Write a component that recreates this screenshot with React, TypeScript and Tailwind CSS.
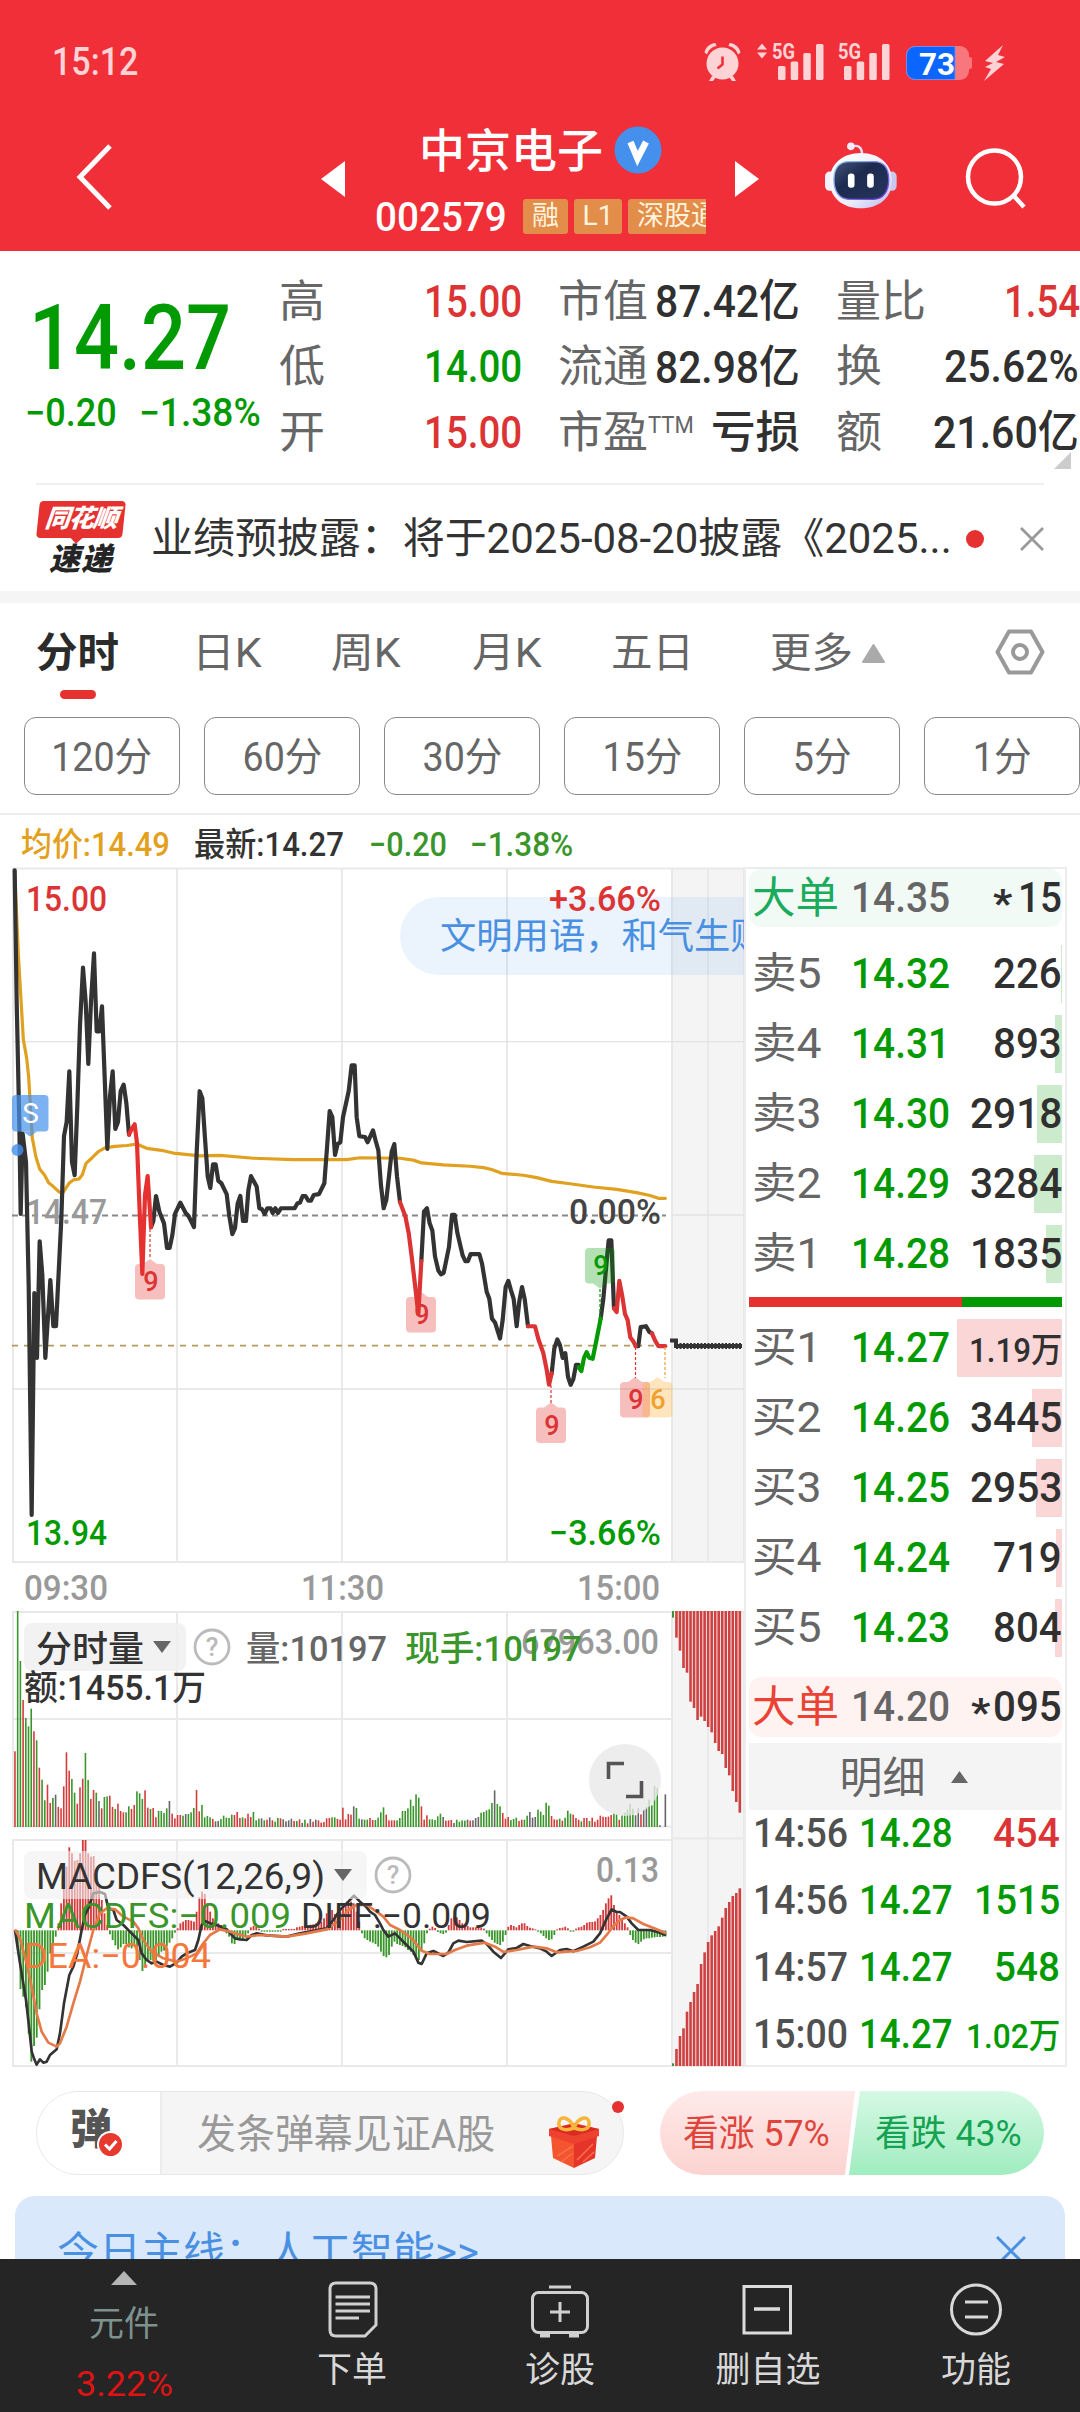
import { useLayoutEffect, useRef } from "react";
import type { ReactNode } from "react";

/** Text squeezed or stretched sideways so that it fills its box exactly. */
function Fit({ className, children }: { className: string; children: ReactNode }) {
  const box = useRef<HTMLDivElement>(null);
  const text = useRef<HTMLSpanElement>(null);
  useLayoutEffect(() => {
    if (box.current && text.current) {
      text.current.style.transform = `scaleX(${box.current.clientWidth / text.current.offsetWidth})`;
    }
  });
  return (
    <div ref={box} className={`shrink-0 whitespace-nowrap leading-none ${className}`}>
      <span ref={text} className="inline-block origin-left">
        {children}
      </span>
    </div>
  );
}

/** Chart label: x and width in chart units, y is the vertical centre. */
function Label(p: { x: number; y: number; w: number; size: number; fill: string; bold?: boolean; children: string }) {
  return (
    <text
      x={p.x}
      y={p.y + p.size * 0.356}
      fontSize={p.size}
      fill={p.fill}
      fontWeight={p.bold ? 500 : 400}
      textLength={p.w}
      lengthAdjust="spacingAndGlyphs"
    >
      {p.children}
    </text>
  );
}

function StatusIcons() {
  return (
    <svg className="h-[46px] w-[312px]" viewBox="700 38 312 46" fill="#fdd3d5">
      <circle cx="722.5" cy="63.500" r="16" />
      <path d="M704.500 52.500c1-5 5-9 11-9.500l1 3c-5 1-8 4-9.500 8.500zM740.500 52.500c-1-5-5-9-11-9.500l-1 3c5 1 8 4 9.500 8.500zM712 76l-3 5h4l3-4zM733 76l3 5h-4l-3-4z" />
      <path d="M722.500 56.500v8l-5 4" fill="none" stroke="#f12f38" strokeWidth="2.600" />
      <path d="M762 43.500l5 6h-10zM762 58.500l5-6h-10z" />
      <g fontSize="22" fontWeight="700">
        <text x="772" y="59" textLength="23" lengthAdjust="spacingAndGlyphs">5G</text>
        <text x="838" y="59" textLength="23" lengthAdjust="spacingAndGlyphs">5G</text>
      </g>
      {[778, 844].map((x) => (
        <g key={x}>
          <rect x={x} y="66" width="7.500" height="14" rx="1.500" />
          <rect x={x + 12.7} y="61.500" width="7.500" height="18.500" rx="1.500" />
          <rect x={x + 25.300} y="53" width="7.500" height="27" rx="1.500" />
          <rect x={x + 38} y="44" width="7.500" height="36" rx="1.500" />
        </g>
      ))}
      <rect x="906" y="46" width="63" height="34" rx="9" fill="#f8777c" />
      <rect x="968" y="57" width="4" height="12" rx="2" fill="#f8777c" />
      <path d="M915 46.500H955V79.500H915a8.500 8.500 0 0 1-8.500-8.500V55a8.500 8.500 0 0 1 8.500-8.500z" fill="#0a66ff" stroke="#7f87e0" />
      <text x="919" y="75" fontSize="32" fontWeight="700" fill="#fff" textLength="36" lengthAdjust="spacingAndGlyphs">73</text>
      <path d="M1003 45l-18 16 8 2-8 4 6 2-7 12 20-17-8-2 9-5-7-2z" />
    </svg>
  );
}

function Robot() {
  return (
    <svg className="h-[67px] w-[72px]" viewBox="405 367 217 202">
      <defs>
        <linearGradient id="head" x1="0" y1="0" x2="1" y2="1">
          <stop offset="0" stopColor="#ffffff" />
          <stop offset=".6" stopColor="#eeeefe" />
          <stop offset="1" stopColor="#b9b6ea" />
        </linearGradient>
        <linearGradient id="visor" x1="0" y1="0" x2="1" y2="1">
          <stop offset="0" stopColor="#46537a" />
          <stop offset=".4" stopColor="#1d2a50" />
          <stop offset="1" stopColor="#27365d" />
        </linearGradient>
        <linearGradient id="rim" x1="0" y1="0" x2="1" y2="1">
          <stop offset="0" stopColor="#8ad4f5" />
          <stop offset="1" stopColor="#6b2fd8" />
        </linearGradient>
      </defs>
      <path d="M488 380c16-4 28 2 29 22" fill="none" stroke="#eadcf6" strokeWidth="7" />
      <circle cx="483" cy="380" r="11.500" fill="#f5ecfb" />
      <rect x="405" y="456" width="36" height="58" rx="14" fill="#f3f1fd" />
      <rect x="585" y="456" width="36" height="58" rx="14" fill="#c9c6ef" />
      <path d="M513 400c56 0 94 34 94 84 0 52-40 83-94 83s-94-31-94-83c0-50 38-84 94-84z" fill="url(#head)" />
      <path d="M478 426h74c30 0 45 20 45 54s-15 60-47 60h-71c-32 0-47-26-47-60s16-54 46-54z" fill="url(#visor)" stroke="url(#rim)" strokeWidth="4" />
      <rect x="474" y="462" width="20" height="43" rx="9" fill="#fff" />
      <rect x="532" y="462" width="20" height="43" rx="9" fill="#fff" />
    </svg>
  );
}

function Header() {
  return (
    <header className="flex h-[251px] flex-col bg-[#f12f38] text-white">
      <div className="mt-[38px] flex h-[46px] items-center justify-between pr-[68px] pl-[52px]">
        <Fit className="mt-[2px] w-[86px] text-[38px] font-medium text-[#fdd3d5]">15:12</Fit>
        <StatusIcons />
      </div>
      <div className="mt-[36px] flex h-[120px] items-start">
        <svg className="mt-[23px] ml-[74px] h-[68px] w-[42px]" viewBox="0 0 42 68" fill="none" stroke="#fff" strokeWidth="5">
          <path d="M36 3L6 34L36 65" />
        </svg>
        <svg className="mt-[41px] ml-[205px] h-[36px] w-[24px]" viewBox="0 0 24 36" fill="#fff">
          <path d="M24 0V36L0 18z" />
        </svg>
        <div className="ml-[29px] w-[332px]">
          <div className="mt-[5px] flex h-[50px] items-center">
            <Fit className="mt-[2px] ml-[45px] w-[184px] text-[46px] font-medium">中京电子</Fit>
            <svg className="ml-[11px] size-[48px]" viewBox="0 0 48 48">
              <circle cx="24" cy="24" r="23.500" fill="#4690ed" />
              <path d="M16.500 16L23.500 32.500L32 16" fill="none" stroke="#fff" strokeWidth="6.500" />
            </svg>
          </div>
          <div className="mt-[22px] flex h-[38px] items-center gap-[6px] overflow-hidden text-[#fff3dc]">
            <Fit className="mt-[3px] mr-[10px] ml-[1px] w-[132px] text-[41px] font-medium text-white">002579</Fit>
            <span className="flex h-[35px] w-[45px] shrink-0 items-center justify-center rounded-[3px] bg-[#e38d4b] text-[27px] leading-none">融</span>
            <span className="flex h-[35px] w-[48px] shrink-0 items-center justify-center rounded-[3px] bg-[#e38d4b] text-[28px] leading-none">L1</span>
            <span className="flex h-[35px] w-[100px] shrink-0 items-center rounded-[3px] bg-[#e38d4b] pl-[9px] text-[27px] leading-none">深股通</span>
          </div>
        </div>
        <svg className="mt-[41px] ml-[29px] h-[36px] w-[24px]" viewBox="0 0 24 36" fill="#fff">
          <path d="M0 0V36L24 18z" />
        </svg>
        <div className="mt-[22px] ml-[66px]">
          <Robot />
        </div>
        <svg className="mt-[27px] ml-[67px] h-[64px] w-[64px]" viewBox="964 147 64 64" fill="none" stroke="#fff" strokeWidth="4.500">
          <circle cx="994.500" cy="177" r="26.500" />
          <path d="M1013 195l11 12" />
        </svg>
      </div>
    </header>
  );
}

function Quote() {
  const label = "text-[44px] text-[#666]";
  return (
    <section className="flex h-[232px] items-start">
      <div className="w-[278px] shrink-0">
        <div className="mt-[43px] flex h-[88px] items-center">
          <Fit className="ml-[29px] w-[202px] text-[91px] font-medium text-[#029a02]">14.27</Fit>
        </div>
        <div className="mt-[12px] flex h-[38px] items-center text-[#029a02]">
          <Fit className="ml-[25px] w-[92px] text-[38px] font-medium">−0.20</Fit>
          <Fit className="ml-[22px] w-[122px] text-[38px] font-medium">−1.38%</Fit>
        </div>
      </div>
      <div className="mt-[18px] ml-px grow text-[#303030]">
        <div className="flex h-[65px] items-center">
          <Fit className={`w-[46px] ${label}`}>高</Fit>
          <Fit className="ml-[99px] w-[98px] text-[44px] font-medium text-[#dc3434]">15.00</Fit>
          <Fit className={`ml-[36px] w-[90px] ${label}`}>市值</Fit>
          <Fit className="ml-[7px] w-[145px] text-[45px] font-medium">87.42亿</Fit>
          <Fit className={`ml-[36px] w-[90px] ${label}`}>量比</Fit>
          <Fit className="ml-[78px] w-[76px] text-[44px] font-medium text-[#dc3434]">1.54</Fit>
        </div>
        <div className="flex h-[66px] items-center">
          <Fit className={`w-[46px] ${label}`}>低</Fit>
          <Fit className="ml-[99px] w-[98px] text-[44px] font-medium text-[#029a02]">14.00</Fit>
          <Fit className={`ml-[36px] w-[90px] ${label}`}>流通</Fit>
          <Fit className="ml-[7px] w-[145px] text-[45px] font-medium">82.98亿</Fit>
          <Fit className={`ml-[36px] w-[46px] ${label}`}>换</Fit>
          <Fit className="ml-[62px] w-[135px] text-[44px] font-medium">25.62%</Fit>
        </div>
        <div className="flex h-[65px] items-center">
          <Fit className={`w-[46px] ${label}`}>开</Fit>
          <Fit className="ml-[99px] w-[98px] text-[44px] font-medium text-[#dc3434]">15.00</Fit>
          <Fit className={`ml-[36px] w-[90px] ${label}`}>市盈</Fit>
          <Fit className="mb-[16px] w-[46px] text-[24px] text-[#666]">TTM</Fit>
          <Fit className="ml-[17px] w-[89px] text-[44px] font-medium">亏损</Fit>
          <Fit className={`ml-[36px] w-[46px] ${label}`}>额</Fit>
          <Fit className="ml-[51px] w-[146px] text-[45px] font-medium">21.60亿</Fit>
        </div>
        <svg className="-mt-[13px] ml-[775px] h-[17px] w-[17px]" viewBox="0 0 17 17" fill="#ccc">
          <path d="M17 0V17H0z" />
        </svg>
      </div>
    </section>
  );
}

function News() {
  return (
    <section className="mx-[36px] flex h-[108px] items-start border-t-2 border-[#f0f0f0]">
      <div className="mt-[16px] w-[90px] text-center leading-none font-black italic">
        <div className="relative mx-[2px] h-[37px] -skew-x-6 rounded-[4px] bg-[#e63131] pt-[5px] text-[25px] tracking-[-1px] text-white">
          同花顺
          <i className="absolute bottom-[-4px] left-[36px] size-[9px] rotate-45 bg-[#e63131]" />
        </div>
        <div className="mt-[6px] text-[31px] tracking-[1px] text-[#252525]">速递</div>
      </div>
      <div className="mt-[28px] flex h-[52px] items-center">
        <Fit className="ml-[25px] w-[801px] text-[42px] text-[#333]">业绩预披露：将于2025-08-20披露《2025...</Fit>
        <span className="ml-[14px] size-[18px] rounded-full bg-[#e63131]" />
        <svg className="ml-[36px] size-[24px]" viewBox="0 0 24 24" stroke="#999" strokeWidth="2.800">
          <path d="M1 1L23 23M23 1L1 23" />
        </svg>
      </div>
    </section>
  );
}

function Tabs() {
  return (
    <section className="border-t-[12px] border-[#f5f5f5] text-[41px] text-[#666]">
      <div className="flex h-[98px] items-center pt-[2px]">
        <Fit className="ml-[36px] w-[83px] font-bold text-[#2b2b2b]">分时</Fit>
        <Fit className="ml-[73px] w-[70px]">日K</Fit>
        <Fit className="ml-[69px] w-[70px]">周K</Fit>
        <Fit className="ml-[71px] w-[70px]">月K</Fit>
        <Fit className="ml-[69px] w-[83px]">五日</Fit>
        <Fit className="ml-[76px] w-[83px]">更多</Fit>
        <svg className="ml-[9px] h-[19px] w-[23px]" viewBox="0 0 23 19" fill="#aaa" stroke="#aaa" strokeWidth="2" strokeLinejoin="round">
          <path d="M11.500 1L22 18H1z" />
        </svg>
        <svg className="mb-[2px] ml-[110px] h-[48px] w-[50px]" viewBox="0 0 50 48" fill="none" stroke="#999" strokeWidth="4">
          <path d="M14 3.500H36L47.500 24L36 44.500H14L2.500 24z" strokeLinejoin="round" />
          <circle cx="25" cy="24" r="7" />
        </svg>
      </div>
      <div className="-mt-[11px] ml-[60px] h-[9px] w-[36px] rounded-full bg-[#e63131]" />
      <div className="mt-[18px] flex gap-[24px] pl-[24px] text-[40px]">
        {["120分", "60分", "30分", "15分", "5分", "1分"].map((t) => (
          <div key={t} className="flex h-[78px] w-[156px] shrink-0 items-center justify-center rounded-[12px] border border-[#888]">
            <span className="mt-[3px] scale-x-[.94] leading-none">{t}</span>
          </div>
        ))}
      </div>
      <div className="mt-[18px] flex h-[53px] items-center border-t-2 border-[#ececec] pt-[8px] text-[33px] font-medium">
        <Fit className="ml-[21px] w-[149px] text-[#e3a01c]">均价:14.49</Fit>
        <Fit className="ml-[24px] w-[150px] text-[#333]">最新:14.27</Fit>
        <Fit className="ml-[25px] w-[78px] text-[#3a962a]">−0.20</Fit>
        <Fit className="ml-[23px] w-[103px] text-[#3a962a]">−1.38%</Fit>
      </div>
    </section>
  );
}

const priceRuns: [string, string][] = [
  ["#333", "44,22 50,300 58,560 62,750 68,580 78,640 86,900 95,1388 103,918 111,1055 119,808 127,880 136,1055 151,890 160,988 168,988 184,760 192,585 200,555 208,448 216,640 224,668 232,520 240,350 249,228 257,300 265,432 273,300 282,198 290,363 298,363 306,310 314,460 322,612 330,500 338,448 346,570 354,555 362,490 371,476 379,515 387,582"],
  ["#333", "453,778 460,765 468,712 478,745 492,770 501,822 509,822 517,795 525,750 541,726 557,748 566,755 582,778 590,620 599,490 607,505 615,590 623,670 631,695 639,645 647,645 655,680 664,685 680,708 688,755 697,793 705,780 713,728 721,712 729,765 738,765 745,700 753,670 770,692 778,738 786,740 794,750 802,738 812,738 818,748 826,738 834,748 843,738 884,738 892,728 900,726 908,712 916,712 925,722 933,722 941,710 957,708 973,685 981,610 989,532 997,545 1005,625 1013,602 1021,598 1029,545 1046,490 1055,435 1064,435 1070,545 1078,585 1095,587 1103,598 1119,573 1127,595 1135,615 1143,690 1151,738 1159,720 1167,670 1175,618 1183,602 1191,670 1200,725"],
  ["#333", "1264,850 1272,745 1281,738 1289,770 1297,785 1305,840 1315,870 1323,878 1331,875 1347,820 1356,752 1364,752 1372,790 1388,838 1396,850 1404,850 1412,835 1438,835 1446,855 1460,915 1468,930 1476,972 1485,980 1500,1014 1508,975 1517,905 1525,892 1533,912 1541,930 1550,988 1558,935 1566,905 1574,930 1584,988"],
  ["#333", "1655,1088 1663,1035 1672,1016 1680,1028 1688,1055 1696,1045 1704,1095 1712,1112 1720,1100 1728,1070 1736,1070"],
  ["#333", "1802,972 1810,930 1822,835 1826,806 1834,806 1842,950"],
  ["#333", "1907,1030 1915,1030 1922,990 1938,988 1948,1000 1956,1003"],
  ["#e63131", "387,582 395,570 404,560 411,600 419,745 427,877 435,710 443,670 453,778"],
  ["#dc3434", "1200,725 1216,755 1226,790 1235,840 1245,900 1255,962 1264,850"],
  ["#dc3434", "1584,988 1605,988 1615,1015 1630,1045 1640,1080 1647,1112 1655,1088"],
  ["#029a02", "1736,1075 1744,1083 1752,1055 1760,1043 1768,1055 1778,1057 1790,1015 1802,972"],
  ["#dc3434", "1842,950 1850,958 1858,892 1867,925 1875,962 1883,975 1891,1012 1900,1020 1907,1030"],
  ["#dc3434", "1956,1003 1965,1018 1975,1030 1996,1030"],
];
const average =
  "44,22 55,200 65,320 70,380 80,420 86,460 97,590 108,630 119,655 134,668 146,684 160,692 178,704 190,704 207,685 220,678 237,676 247,667 258,643 275,632 295,618 315,610 345,607 380,605 410,602 440,611 490,616 520,621 600,627 660,626 760,632 880,635 1040,635 1080,631 1200,632 1240,636 1265,642 1330,646 1410,649 1450,652 1475,656 1505,664 1570,668 1610,673 1655,681 1710,686 1780,693 1850,698 1910,705 1950,711 1975,717 1996,717";

function Marker({ x, y, tx, color, bg, text, down }: { x: number; y: number; tx: number; color: string; bg: string; text: string; down?: boolean }) {
  return (
    <g>
      <rect x={x} y={y} width="30" height="35.500" rx="4" fill={bg} />
      <path d={down ? `M${x + 8} ${y + 35.5}l7 5 7-5z` : `M${x + 8} ${y}l7-5 7 5z`} fill={bg} />
      <text x={tx} y={y + 27} fontSize="27" fontWeight="500" textAnchor="middle" fill={color}>
        {text}
      </text>
    </g>
  );
}

function PriceChart() {
  return (
    <svg className="block h-[744px] w-[745px]" viewBox="0 866 745 744">
      <rect x="671" y="868" width="74" height="694" fill="#f4f4f4" />
      <g stroke="#e9e9e9" strokeWidth="2" fill="none">
        <path d="M12 868.500H745M12 1562H745M13 868V1562M177 868V1562M342 868V1562M507 868V1562M672 868V1562M708 868V1562M744 868V1562" />
        <path d="M12 1041.700H745M12 1389H745M672 1215H745" strokeWidth="1.300" stroke="#e2e2e2" />
      </g>
      <path d="M439 897H745V975H439a39 39 0 0 1 0-78z" fill="#4690ed" fillOpacity=".11" />
      <path d="M12 1215.500H666" stroke="#888" strokeWidth="2" strokeDasharray="6 4" />
      <path d="M12 1345.600H668" stroke="#b59a5b" strokeWidth="1.800" strokeDasharray="6 6" />
      <Label x={26} y={1212} w={81} size={35} fill="#999" bold>14.47</Label>
      <g transform="translate(0 860) scale(.33333 .47189)" fill="none" strokeLinejoin="round" strokeLinecap="round">
        <polyline points={average} stroke="#e0a020" strokeWidth="3.200" vectorEffect="non-scaling-stroke" />
        {priceRuns.map(([color, points]) => (
          <polyline key={points} points={points} stroke={color} strokeWidth="4.200" vectorEffect="non-scaling-stroke" />
        ))}
      </g>
      <path d="M672 1338.500V1340.500H676V1346H742" fill="none" stroke="#333" strokeWidth="4" />
      <path d="M676 1346H742" fill="none" stroke="#333" strokeWidth="6" strokeDasharray="2 1.500" />
      <g stroke="#dc3434" strokeWidth="1.200" strokeDasharray="3 2">
        <path d="M150 1229V1257M551 1385V1404M635.500 1347V1378" />
        <path d="M600 1289V1318" stroke="#029a02" />
        <path d="M665 1347V1378" stroke="#e8a030" />
      </g>
      <Marker x={135} y={1264} tx={151} color="#dc3434" bg="#e6313150" text="9" />
      <Marker x={406} y={1297} tx={422} color="#dc3434" bg="#e6313150" text="9" />
      <Marker x={536} y={1407.500} tx={552} color="#dc3434" bg="#e6313150" text="9" />
      <Marker x={620} y={1382} tx={636} color="#dc3434" bg="#e6313150" text="9" />
      <Marker x={642.500} y={1382} tx={658} color="#f0a02c" bg="#ffa8204c" text="6" />
      <Marker x={585} y={1248} tx={601} color="#029a02" bg="#029a024c" text="9" down />
      <rect x="12" y="1095" width="36.500" height="36.500" rx="4" fill="#4690edb4" />
      <path d="M23 1131.500l7 5 7-5z" fill="#4690edb4" />
      <circle cx="17.500" cy="1150" r="6" fill="#4690edd0" />
      <text x="30.500" y="1123" fontSize="28" textAnchor="middle" fill="#fff">S</text>
      <Label x={26} y={899} w={81} size={35} fill="#dc3434" bold>15.00</Label>
      <Label x={26} y={1533} w={81} size={35} fill="#029a02" bold>13.94</Label>
      <Label x={549} y={899} w={112} size={35} fill="#dc3434" bold>+3.66%</Label>
      <Label x={569} y={1212} w={92} size={35} fill="#444" bold>0.00%</Label>
      <Label x={549} y={1533} w={112} size={35} fill="#029a02" bold>−3.66%</Label>
      <text x="440" y="949" fontSize="36.300" fill="#4a90e2">文明用语，和气生财</text>
      <Label x={24} y={1588} w={84} size={35} fill="#999" bold>09:30</Label>
      <Label x={301} y={1588} w={83} size={35} fill="#999" bold>11:30</Label>
      <Label x={577} y={1588} w={83} size={35} fill="#999" bold>15:00</Label>
    </svg>
  );
}

const STEP = 8.13;
const tones: Record<string, string> = { r: "#d43c3c", g: "#3a962a", x: "#666" };

/** One entry per minute: bar height and tone (r rising, g falling, x flat). */
const volume =
  "227r 648g 498g 381r 327g 302g 355g 287r 260g 178r 142g 80g 127r 72r 87g 97x 60r 56r 122r 224r 169r 144g 103g 70r 119r 145r 222g 141g 84r 111r 103g 78x 56r 90g 92g 94r 60r 54g 70r 48r 44r 44g 62g 54r 66r 107g 101g 84g 110r 58r 54g 57r 29r 48g 48g 42g 56g 78x 40r 26r 36r 36r 34g 39x 39g 44g 57g 111r 47r 66g 29g 33g 29g 24r 17x 18x 24g 34g 28g 27g 37g 36r 45r 27r 29g 26r 40r 30r 45g 20g 25g 26x 20g 22r 29x 20r 16g 27g 26r 23x 17x 20x 25x 18r 18g 23r 12x 22g 11r 24x 16r 22x 20r 13r 15r 26r 27r 29g 29g 24r 22r 58r 23r 39r 37r 62x 57g 25g 23x 22g 22g 27r 21r 21g 28g 44g 59g 37r 20r 20r 20r 20g 27g 48g 48g 56g 82g 63g 98g 88g 62r 22r 35r 23g 23g 21g 32g 40g 30x 19r 20r 21r 12x 22g 16g 20g 19g 22x 19r 20x 27x 30x 43g 45g 50g 53g 72g 110x 69g 62g 42r 25r 30r 21g 24g 28g 18r 22r 22g 34g 45x 28x 30x 52g 46g 36g 73g 64g 33r 23r 22r 25g 19r 28g 49g 40g 37r 27r 22r 17g 27r 27r 18g 28r 16r 22r 34r 31r 30r 31r 36r 41g 38g 22r 35g 43g 52g 70g 55g 35x 57x 38r 52x 60x 82g 65g 123g 117g 5x 0x 98x";

const macd = [
  0, -60, -176, -199, -229, -310, -394, -347, -322, -237, -179, -164, -124, -69, -39, -19, 21, 81, 171, 191, 249, 231, 209, 211, 231, 271, 271, 231, 221, 223, 171,
  131, 91, 51, 16, -12, -29, -45, -57, -51, -41, -41, -51, -54, -47, -54, -89, -122, -104, -89, -89, -91, -89, -79, -64, -61, -49, -37, -24, -7, 6, 21, 26, 31, 31,
  29, 26, 56, 99, 116, 109, 81, 56, 36, 31, 21, 16, 9, -9, -19, -39, -41, -29, -24, -29, -19, -9, 9, 13, 11, 5, -4, -4, -4, -4, -4, -4, -4, -4, 4, 4, 4, 4, 4, 9,
  11, 13, 13, 15, 17, 18, 20, 22, 26, 36, 51, 66, 61, 49, 51, 56, 66, 76, 81, 86, 81, 56, 26, -9, -24, -29, -34, -37, -41, -49, -64, -77, -81, -74, -49, -34, -41,
  -44, -47, -51, -59, -64, -74, -84, -89, -64, -39, -9, 5, 11, 7, -5, -9, -11, -7, 16, 36, 41, 39, 31, 21, 16, 13, 9, 9, 9, 9, 8, 5, -9, -19, -29, -37, -41, -44,
  -34, -14, 11, 16, 13, 9, 16, 21, 21, 13, 8, 6, 3, -4, -9, -17, -24, -29, -27, -14, 3, 7, 8, 11, 6, -4, -4, 5, 9, 11, 16, 23, 25, 25, 27, 36, 46, 61, 81, 96, 105,
  76, 56, 46, 36, 21, 9, -14, -29, -37, -41, -34, -27, -24, -24, -22, -21, -20, -20, -19, -18,
];

const diff =
  "45,1020 60,1120 78,1230 86,1300 95,1385 103,1408 110,1424 120,1408 130,1418 140,1415 150,1395 170,1378 180,1330 192,1240 208,1155 220,1130 232,1090 245,1020 255,975 265,955 280,910 300,906 315,912 325,955 340,960 350,990 370,1005 395,1030 415,1050 425,1090 440,1110 455,1120 470,1115 490,1125 510,1130 530,1118 545,1100 560,1090 585,1080 595,1050 605,1005 615,993 630,1000 650,1005 680,1018 705,1045 720,1048 740,1050 755,1035 770,1030 800,1036 860,1040 900,1030 980,1015 1000,990 1020,960 1045,935 1062,917 1080,935 1098,950 1110,965 1125,975 1140,1000 1150,1020 1165,1040 1185,1030 1200,1045 1220,1065 1240,1085 1255,1118 1265,1122 1280,1090 1300,1083 1330,1098 1345,1088 1360,1060 1375,1052 1400,1056 1445,1052 1460,1062 1480,1085 1503,1104 1525,1078 1550,1074 1570,1062 1590,1068 1620,1075 1640,1085 1655,1098 1680,1080 1700,1077 1720,1084 1750,1070 1780,1055 1800,1030 1818,990 1835,958 1850,966 1860,966 1880,980 1895,1000 1915,1020 1950,1020 1980,1028 1998,1036";
const dea =
  "45,1018 60,1045 80,1120 95,1190 110,1270 125,1325 145,1358 170,1370 180,1360 200,1310 220,1240 240,1175 260,1095 280,1020 300,970 320,955 345,958 370,980 400,995 415,1015 430,1050 455,1085 490,1105 530,1115 560,1105 590,1090 610,1060 630,1035 660,1018 690,1025 740,1040 780,1035 860,1040 920,1030 980,1018 1020,990 1045,960 1070,945 1100,945 1130,965 1150,980 1170,1005 1200,1020 1235,1045 1265,1082 1290,1092 1340,1092 1365,1080 1400,1067 1455,1058 1485,1070 1510,1086 1550,1080 1600,1070 1640,1075 1670,1087 1730,1083 1770,1072 1800,1058 1820,1035 1840,1008 1860,990 1880,982 1900,985 1930,1002 1970,1018 1998,1030";

const sideTop = [143, 182, 234, 248, 335, 354, 390, 380, 393, 411, 427, 459, 483, 492, 534, 556, 603, 636, 668];
const sideBottom = [1377, 1338, 1315, 1265, 1236, 1206, 1182, 1122, 1087, 1056, 1036, 1023, 1009, 983, 954, 936, 918, 909, 895];

function HelpIcon({ cx, cy }: { cx: number; cy: number }) {
  return (
    <g>
      <circle cx={cx} cy={cy} r="17" fill="none" stroke="#bbb" strokeWidth="2.800" />
      <text x={cx} y={cy + 9} fontSize="26" fontWeight="500" textAnchor="middle" fill="#bbb">?</text>
    </g>
  );
}

function Indicators() {
  return (
    <svg className="block h-[460px] w-[745px]" viewBox="0 1610 745 460">
      <rect x="672" y="1611" width="73" height="455" fill="#f4f4f4" />
      <path
        d="M12 1612H745M12 1719H671M12 1826.500H671M13 1612V1827M177 1612V1827M342 1612V1827M507 1612V1827M12 1840H671M12 1953H671M12 2066H745M13 1840V2066M177 1840V2066M342 1840V2066M507 1840V2066M672 1612V2066M708 1612V2066M744 1612V2066M672 1838.500H745"
        fill="none"
        stroke="#e9e9e9"
        strokeWidth="2"
      />
      <g transform="translate(0 1590) scale(.33333)">
        {volume.split(" ").map((bar, i) => {
          const h = parseInt(bar, 10);
          return <rect key={i} x={42.5 + i * STEP} y={711 - h} width="4.800" height={h} fill={tones[bar.slice(-1)]} />;
        })}
        {macd.map((v, i) => (
          <rect key={i} x={42.5 + i * STEP} y={v > 0 ? 1021 - v : 1021} width="5.500" height={Math.abs(v)} fill={v > 0 ? tones.r : tones.g} />
        ))}
        {sideTop.map((y, i) => (
          <g key={i} fill="#cf4040">
            <rect x={2025.500 + i * 10.56} y="63" width="7.800" height={y - 63} />
            <rect x={2025.500 + i * 10.56} y={sideBottom[i]} width="7.800" height={1428 - sideBottom[i]} />
          </g>
        ))}
        <rect x="2016" y="63" width="6" height="20" fill="#3a962a" />
        <rect x="2016" y="1420" width="6" height="8" fill="#3a962a" />
        <g fill="none" strokeLinejoin="round">
          <polyline points={diff} stroke="#333" strokeWidth="8" />
          <polyline points={dea} stroke="#e47a48" strokeWidth="8" />
        </g>
      </g>

      <rect x="24" y="1623" width="162" height="48" rx="8" fill="#f0f0f0" fillOpacity=".85" />
      <Label x={36} y={1649.500} w={108} size={36} fill="#333" bold>分时量</Label>
      <path d="M153 1641H171L162 1653z" fill="#666" />
      <HelpIcon cx={212} cy={1647} />
      <Label x={246} y={1649} w={141} size={35} fill="#666" bold>量:10197</Label>
      <Label x={521} y={1642} w={138} size={35} fill="#999" bold>67963.00</Label>
      <Label x={405} y={1649} w={177} size={35} fill="#3a962a" bold>现手:10197</Label>
      <Label x={24} y={1688} w={182} size={35} fill="#333" bold>额:1455.1万</Label>
      <circle cx="625" cy="1780" r="36" fill="#e8e8e8" fillOpacity=".8" />
      <path d="M624 1763.500H608.500V1779M626 1796.500H641.500V1781" fill="none" stroke="#555" strokeWidth="3.600" />

      <rect x="24" y="1851" width="343" height="48" rx="8" fill="#f0f0f0" fillOpacity=".6" />
      <Label x={36} y={1876.500} w={289} size={36} fill="#333">MACDFS(12,26,9)</Label>
      <path d="M334 1869H352L343 1881z" fill="#666" />
      <HelpIcon cx={393} cy={1875} />
      <Label x={596} y={1870} w={63} size={35} fill="#999" bold>0.13</Label>
      <Label x={24} y={1916} w={267} size={35} fill="#3a962a">MACDFS:−0.009</Label>
      <Label x={301} y={1916} w={190} size={35} fill="#333">DIFF:−0.009</Label>
      <Label x={24} y={1956} w={187} size={35} fill="#f5773b">DEA:−0.004</Label>
    </svg>
  );
}

/** Order book level: name, price, volume; bar is the width of the depth bar. */
function Level({ name, price, vol, bar, tone, volWidth }: { name: string; price: string; vol: string; bar: string; tone: string; volWidth: string }) {
  return (
    <div className="relative flex h-[58px] items-center">
      <i className={`absolute top-0 right-0 h-full ${bar} ${tone}`} />
      <Fit className="relative ml-[3px] w-[70px] text-[42px] text-[#666]">{name}</Fit>
      <Fit className="relative ml-[29px] w-[99px] text-[42px] font-medium text-[#029a02]">{price}</Fit>
      <Fit className={`relative ml-auto font-medium text-[#303030] ${volWidth}`}>{vol}</Fit>
    </div>
  );
}

function OrderBook() {
  const four = "w-[92px] text-[42px]";
  const three = "w-[69px] text-[42px]";
  const star = "w-[19px] pt-[12px] text-[38px] font-bold text-[#303030]";
  return (
    <aside className="-ml-px mt-px h-[1200px] w-[323px] border-2 border-[#ececec] px-[3px]">
      <div className="flex h-[58px] items-center rounded-[12px] bg-[#f2faf6]">
        <Fit className="ml-[3px] w-[87px] text-[43px] text-[#1aab5c]">大单</Fit>
        <Fit className="ml-[12px] w-[99px] text-[42px] font-medium text-[#666]">14.35</Fit>
        <Fit className={`ml-auto ${star}`}>*</Fit>
        <Fit className="ml-[6px] w-[44px] text-[42px] font-medium text-[#303030]">15</Fit>
      </div>
      <div className="mt-[18px] flex flex-col gap-[12px]">
        <Level name="卖5" price="14.32" vol="226" bar="w-px" tone="bg-[#029a0233]" volWidth={three} />
        <Level name="卖4" price="14.31" vol="893" bar="w-[7px]" tone="bg-[#029a0233]" volWidth={three} />
        <Level name="卖3" price="14.30" vol="2918" bar="w-[25px]" tone="bg-[#029a0233]" volWidth={four} />
        <Level name="卖2" price="14.29" vol="3284" bar="w-[28px]" tone="bg-[#029a0233]" volWidth={four} />
        <Level name="卖1" price="14.28" vol="1835" bar="w-[16px]" tone="bg-[#029a0233]" volWidth={four} />
      </div>
      <div className="mt-[14px] flex h-[10px]">
        <span className="w-[213px] bg-[#e63131]" />
        <span className="grow bg-[#029a02]" />
      </div>
      <div className="mt-[12px] flex flex-col gap-[12px]">
        <Level name="买1" price="14.27" vol="1.19万" bar="w-[105px]" tone="bg-[#e6313133]" volWidth="w-[93px] pt-[3px] text-[34px]" />
        <Level name="买2" price="14.26" vol="3445" bar="w-[30px]" tone="bg-[#e6313133]" volWidth={four} />
        <Level name="买3" price="14.25" vol="2953" bar="w-[26px]" tone="bg-[#e6313133]" volWidth={four} />
        <Level name="买4" price="14.24" vol="719" bar="w-[6px]" tone="bg-[#e6313133]" volWidth={three} />
        <Level name="买5" price="14.23" vol="804" bar="w-[7px]" tone="bg-[#e6313133]" volWidth={three} />
      </div>
      <div className="mt-[20px] flex h-[60px] items-center rounded-[12px] bg-[#fff3f2]">
        <Fit className="ml-[3px] w-[87px] text-[43px] text-[#ea4335]">大单</Fit>
        <Fit className="ml-[12px] w-[99px] text-[42px] font-medium text-[#666]">14.20</Fit>
        <Fit className={`ml-auto ${star}`}>*</Fit>
        <Fit className="ml-[3px] w-[69px] text-[42px] font-medium text-[#303030]">095</Fit>
      </div>
      <div className="mt-[6px] flex h-[67px] items-center justify-center gap-[25px] bg-[#f4f4f4] pt-[3px] pr-[4px]">
        <Fit className="w-[86px] text-[43px] text-[#666]">明细</Fit>
        <svg className="mb-[3px] h-[12px] w-[17px]" viewBox="0 0 17 12" fill="#666">
          <path d="M8.500 0L17 12H0z" />
        </svg>
      </div>
      <div className="-mt-[10px] text-[41px] font-medium text-[#029a02]">
        {[
          { t: "14:56", p: "14.28", v: "454", c: "w-[67px] text-[#dc3434]" },
          { t: "14:56", p: "14.27", v: "1515", c: "w-[86px]" },
          { t: "14:57", p: "14.27", v: "548", c: "w-[66px]" },
          { t: "15:00", p: "14.27", v: "1.02万", c: "w-[94px] pt-[3px] text-[34px]" },
        ].map((r, i) => (
          <div key={i} className="flex h-[67px] items-center">
            <Fit className="ml-[4px] w-[95px] text-[#505050]">{r.t}</Fit>
            <Fit className="ml-[11px] w-[94px]">{r.p}</Fit>
            <Fit className={`mr-[2px] ml-auto ${r.c}`}>{r.v}</Fit>
          </div>
        ))}
      </div>
    </aside>
  );
}

function Gift() {
  return (
    <svg className="h-[52px] w-[50px]" viewBox="0 0 50 52">
      <path d="M2 20L25 27V52L4 42z" fill="#f4552f" />
      <path d="M48 20L25 27V52L46 42z" fill="#e5342a" />
      <path d="M0 13L25 7L50 13V20L25 28L0 20z" fill="#ee4230" />
      <path d="M0 13L25 8L50 13L25 20z" fill="#d92b22" />
      <path d="M8 40L24 30M12 46L24 37M28 44L44 28M34 46L45 36" stroke="#fb7048" strokeWidth="1.500" />
      <g fill="none" stroke="#f7b53c" strokeWidth="3.500">
        <path d="M25 12C14 16 9 12 10 6C11 -1 21 1 25 12z" />
        <path d="M25 12C36 16 41 12 40 6C39 -1 29 1 25 12z" />
      </g>
    </svg>
  );
}

function Barrage() {
  return (
    <section className="flex h-[126px] items-start pt-[21px]">
      <div className="relative ml-[36px] flex h-[84px] w-[588px] items-center rounded-full border border-[#e8e8e8] bg-[#f5f5f5]">
        <div className="relative flex h-full w-[125px] items-center rounded-l-full border-r-2 border-[#ececec] bg-white">
          <span className="mb-[6px] ml-[33px] text-[42px] leading-none font-black text-[#555]">弹</span>
          <svg className="absolute top-[39px] left-[60px] size-[27px]" viewBox="0 0 27 27">
            <circle cx="13.500" cy="13.500" r="12.500" fill="#e8392f" stroke="#fff" strokeWidth="2" />
            <path d="M8 13.500L12.500 18L19.500 10" fill="none" stroke="#fff" strokeWidth="3" />
          </svg>
        </div>
        <Fit className="mt-[3px] ml-[35px] w-[298px] text-[40px] text-[#999]">发条弹幕见证A股</Fit>
        <div className="mt-[18px] ml-[54px]">
          <Gift />
        </div>
        <i className="absolute top-[9px] right-[-1px] size-[12px] rounded-full bg-[#e63131]" />
      </div>
      <div className="ml-[36px] flex h-[84px] w-[384px] overflow-hidden rounded-full text-[36px]">
        <div className="flex w-[195px] shrink-0 items-center bg-linear-to-b from-[#feeae9] to-[#fcd3d0] [clip-path:polygon(0_0,100%_0,185px_100%,0_100%)]">
          <Fit className="ml-[23px] w-[147px] pt-[2px] text-[#e0453b]">看涨 57%</Fit>
        </div>
        <div className="-ml-[6px] flex grow items-center bg-linear-to-b from-[#d5f9e4] to-[#a0ecc0] [clip-path:polygon(11px_0,100%_0,100%_100%,0_100%)]">
          <Fit className="ml-[26px] w-[147px] pt-[2px] text-[#14a352]">看跌 43%</Fit>
        </div>
      </div>
    </section>
  );
}

function BottomBar() {
  const item = "flex w-[208px] flex-col items-center text-[35px] leading-none text-[#d8d8d8]";
  const icon = "mt-[20px] mb-[14px] h-[60px] w-[64px]";
  return (
    <nav className="flex h-[153px] items-start bg-[#252525]">
      <div className="flex w-[248px] flex-col items-center text-[35px] leading-none">
        <svg className="mt-[12px] h-[14px] w-[26px]" viewBox="0 0 26 14" fill="#b5b5b5">
          <path d="M13 0L26 14H0z" />
        </svg>
        <Fit className="mt-[22px] w-[70px] text-[#7d918e]">元件</Fit>
        <Fit className="mt-[25px] w-[97px] text-[#de1414]">3.22%</Fit>
      </div>
      <div className={item}>
        <svg className={icon} viewBox="320 2279 64 60" fill="none" stroke="#d0d0d0" strokeWidth="3">
          <path d="M336 2283H370Q376 2283 376 2289V2325L365 2336H336Q330 2336 330 2330V2289Q330 2283 336 2283z" />
          <path d="M335.500 2297H370M335.500 2304H370M335.500 2311H370M335.500 2318H359" />
        </svg>
        下单
      </div>
      <div className={item}>
        <svg className={icon} viewBox="528 2279 64 60" fill="none" stroke="#d0d0d0" strokeWidth="3">
          <rect x="532.500" y="2292.500" width="55" height="40" rx="6" />
          <path d="M549 2287H571M560 2302V2322M550 2312H570" />
          <path d="M540 2335.500H550M569 2335.500H579" strokeWidth="4" />
        </svg>
        诊股
      </div>
      <div className={item}>
        <svg className={icon} viewBox="736 2279 64 60" fill="none" stroke="#dcdcdc" strokeWidth="3">
          <rect x="744" y="2286.500" width="46.500" height="46.500" />
          <path d="M754 2309H780" strokeWidth="3.500" />
        </svg>
        删自选
      </div>
      <div className={item}>
        <svg className={icon} viewBox="943 2279 64 60" fill="none" stroke="#d8d8d8" strokeWidth="3">
          <circle cx="975" cy="2309.500" r="24.500" />
          <path d="M964 2302H987M964 2317H987" />
        </svg>
        功能
      </div>
    </nav>
  );
}

export default function App() {
  return (
    <main className="h-[2412px] w-[1080px] overflow-hidden bg-white font-['Roboto','Noto_Sans_CJK_SC',sans-serif]">
      <Header />
      <Quote />
      <News />
      <Tabs />
      <section className="flex h-[1204px]">
        <div className="w-[745px] shrink-0">
          <PriceChart />
          <Indicators />
        </div>
        <OrderBook />
      </section>
      <Barrage />
      <section className="mx-[15px] flex h-[63px] items-start justify-between overflow-hidden rounded-t-[20px] bg-[#d9e8fb] pr-[39px] pl-[42px] text-[#4a90e2]">
        <Fit className="mt-[36px] w-[422px] text-[41px]">今日主线：人工智能&gt;&gt;</Fit>
        <svg className="mt-[40px] h-[30px] w-[30px] shrink-0" viewBox="0 0 30 30" stroke="#4a90e2" strokeWidth="3">
          <path d="M1 1L29 29M29 1L1 29" />
        </svg>
      </section>
      <BottomBar />
    </main>
  );
}
